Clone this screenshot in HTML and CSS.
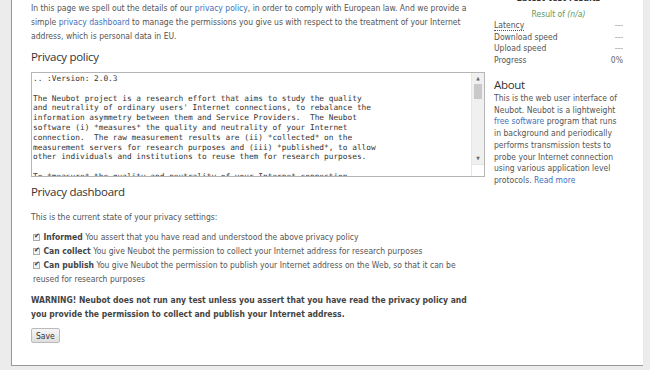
FILE: index.html
```html
<!DOCTYPE html>
<html lang="en">
<head>
    <meta charset="UTF-8">
    <title>Neubot - Privacy</title>
    <link rel="stylesheet" href="styles.css">
</head>
<body>
    <div class="page">
        <div class="panel">
            <div class="main">
                <p class="intro">In this page we spell out the details of our <a href="#">privacy policy</a>, in order to comply with European law. And we provide a simple <a href="#">privacy dashboard</a> to manage the permissions you give us with respect to the treatment of your Internet address, which is personal data in EU.</p>

                <h2>Privacy policy</h2>
                <div class="policy-box">
                    <textarea class="policy-text" readonly>.. :Version: 2.0.3

The Neubot project is a research effort that aims to study the quality
and neutrality of ordinary users' Internet connections, to rebalance the
information asymmetry between them and Service Providers.  The Neubot
software (i) *measures* the quality and neutrality of your Internet
connection.  The raw measurement results are (ii) *collected* on the
measurement servers for research purposes and (iii) *published*, to allow
other individuals and institutions to reuse them for research purposes.

To *measure* the quality and neutrality of your Internet connection,</textarea>
                    <div class="scroll">
                        <span class="arrow">&#9650;</span>
                        <span class="thumb"></span>
                        <span class="track"></span>
                        <span class="arrow">&#9660;</span>
                        <span class="grip"></span>
                    </div>
                </div>

                <h2>Privacy dashboard</h2>
                <p class="state">This is the current state of your privacy settings:</p>

                <ul class="settings">
                    <li><input type="checkbox" checked> <b>Informed</b> You assert that you have read and understood the above privacy policy</li>
                    <li><input type="checkbox" checked> <b>Can collect</b> You give Neubot the permission to collect your Internet address for research purposes</li>
                    <li><input type="checkbox" checked> <b>Can publish</b> You give Neubot the permission to publish your Internet address on the Web, so that it can be reused for research purposes</li>
                </ul>

                <p class="warning">WARNING! Neubot does not run any test unless you assert that you have read the privacy policy and you provide the permission to collect and publish your Internet address.</p>

                <button class="btn-save">Save</button>
            </div>

            <div class="sidebar">
                <h3 class="results-title">Latest test results</h3>
                <p class="result-of">Result of <em>(n/a)</em></p>
                <table class="results">
                    <tr><td><span class="hint">Latency</span></td><td class="val">---</td></tr>
                    <tr><td>Download speed</td><td class="val">---</td></tr>
                    <tr><td>Upload speed</td><td class="val">---</td></tr>
                    <tr><td>Progress</td><td class="val dark">0%</td></tr>
                </table>

                <h2 class="about-title">About</h2>
                <p class="about">This is the web user interface of Neubot. Neubot is a lightweight <a href="#">free software</a> program that runs in background and periodically performs transmission tests to probe your Internet connection using various application level protocols. <a href="#">Read more</a></p>
            </div>
        </div>
    </div>
</body>
</html>
```

FILE: styles.css
```css
body {
    margin: 0;
    background: #ececec;
    font-family: "DejaVu Sans Condensed", "DejaVu Sans", sans-serif;
    font-size: 8.5px;
    color: #555;
    overflow: hidden;
}

a {
    color: #3b73c0;
    text-decoration: none;
}

.page {
    margin-top: -10px;
    padding: 0 7px 0 11px;
}

.panel {
    display: flex;
    gap: 16px;
    background: white;
    border-left: 1px solid #999;
    border-bottom: 1px solid #999;
    box-shadow: 0 1px 1px #d8d8d8;
    padding: 0 20px 22px 19px;
}

.main {
    width: 447px;
    flex-shrink: 0;
    padding-top: 11px;
}

.main p {
    margin: 0;
    line-height: 14px;
}

h2 {
    font-family: "Open Sans", sans-serif;
    font-weight: normal;
    font-size: 11.5px;
    letter-spacing: -0.3px;
    color: #333;
    margin: 0;
    line-height: 18px;
}

.intro {
    margin-bottom: 5px !important;
}

.policy-box {
    display: flex;
    width: 452px;
    height: 103px;
    border: 1px solid #b5b5b5;
    margin: 6px 0;
}

.policy-text {
    flex: 1;
    border: none;
    resize: none;
    overflow: hidden;
    padding: 1px 1px;
    margin: 0;
    font-family: "DejaVu Sans Mono", monospace;
    font-size: 7.8px;
    line-height: 9.8px;
    color: #333;
    outline: none;
}

.scroll {
    width: 12px;
    display: flex;
    flex-direction: column;
    align-items: center;
    background: #f0f0f0;
    border-left: 1px solid #e6e6e6;
}

.scroll .arrow {
    font-size: 5px;
    color: #666;
    height: 11px;
    line-height: 11px;
}

.scroll .thumb {
    width: 8px;
    height: 15px;
    background: #c9c9c9;
}

.scroll .track {
    flex: 1;
}

.scroll .grip {
    width: 12px;
    height: 11px;
    background: white;
    border-top: 1px solid #e6e6e6;
}

.state {
    margin: 9px 0 6px !important;
}

.settings {
    list-style: none;
    margin: 0;
    padding: 0 0 0 2px;
    line-height: 14px;
}

.settings b {
    color: #444;
}

.settings input {
    appearance: none;
    width: 7px;
    height: 7px;
    margin: 0 1px 0 0;
    border: 1px solid #aaa;
    background: #f4f4f4;
    vertical-align: -1px;
    position: relative;
}

.settings input:checked::after {
    content: "\2714";
    position: absolute;
    left: 0;
    top: -3px;
    font-size: 7px;
    color: #333;
}

.warning {
    margin: 7px 0 7px !important;
    font-weight: bold;
    color: #444;
}

.btn-save {
    font-family: "DejaVu Sans Condensed", sans-serif;
    font-size: 8.5px;
    color: #333;
    height: 15px;
    padding: 0 4px;
    border: 1px solid #bbb;
    border-radius: 2px;
    background: linear-gradient(#f6f6f6, #dedede);
}

.sidebar {
    flex: 1;
    padding-top: 7px;
    line-height: 11.5px;
}

.sidebar p {
    margin: 0;
}

.results-title {
    margin: -4px 0 4px;
    font-size: 9px;
    line-height: 11.5px;
    text-align: center;
    color: #333;
}

.result-of {
    text-align: center;
    color: #5c9a5c;
}

.results {
    width: 100%;
    border-collapse: collapse;
}

.results td {
    padding: 0;
    line-height: 11.5px;
}

.results .val {
    text-align: right;
    color: #999;
}

.results .dark {
    color: #666;
}

.hint {
    border-bottom: 1px dotted #555;
}

.about-title {
    margin: 11px 0 0;
    line-height: 16px;
}

.about {
    line-height: 11.7px;
}
```
